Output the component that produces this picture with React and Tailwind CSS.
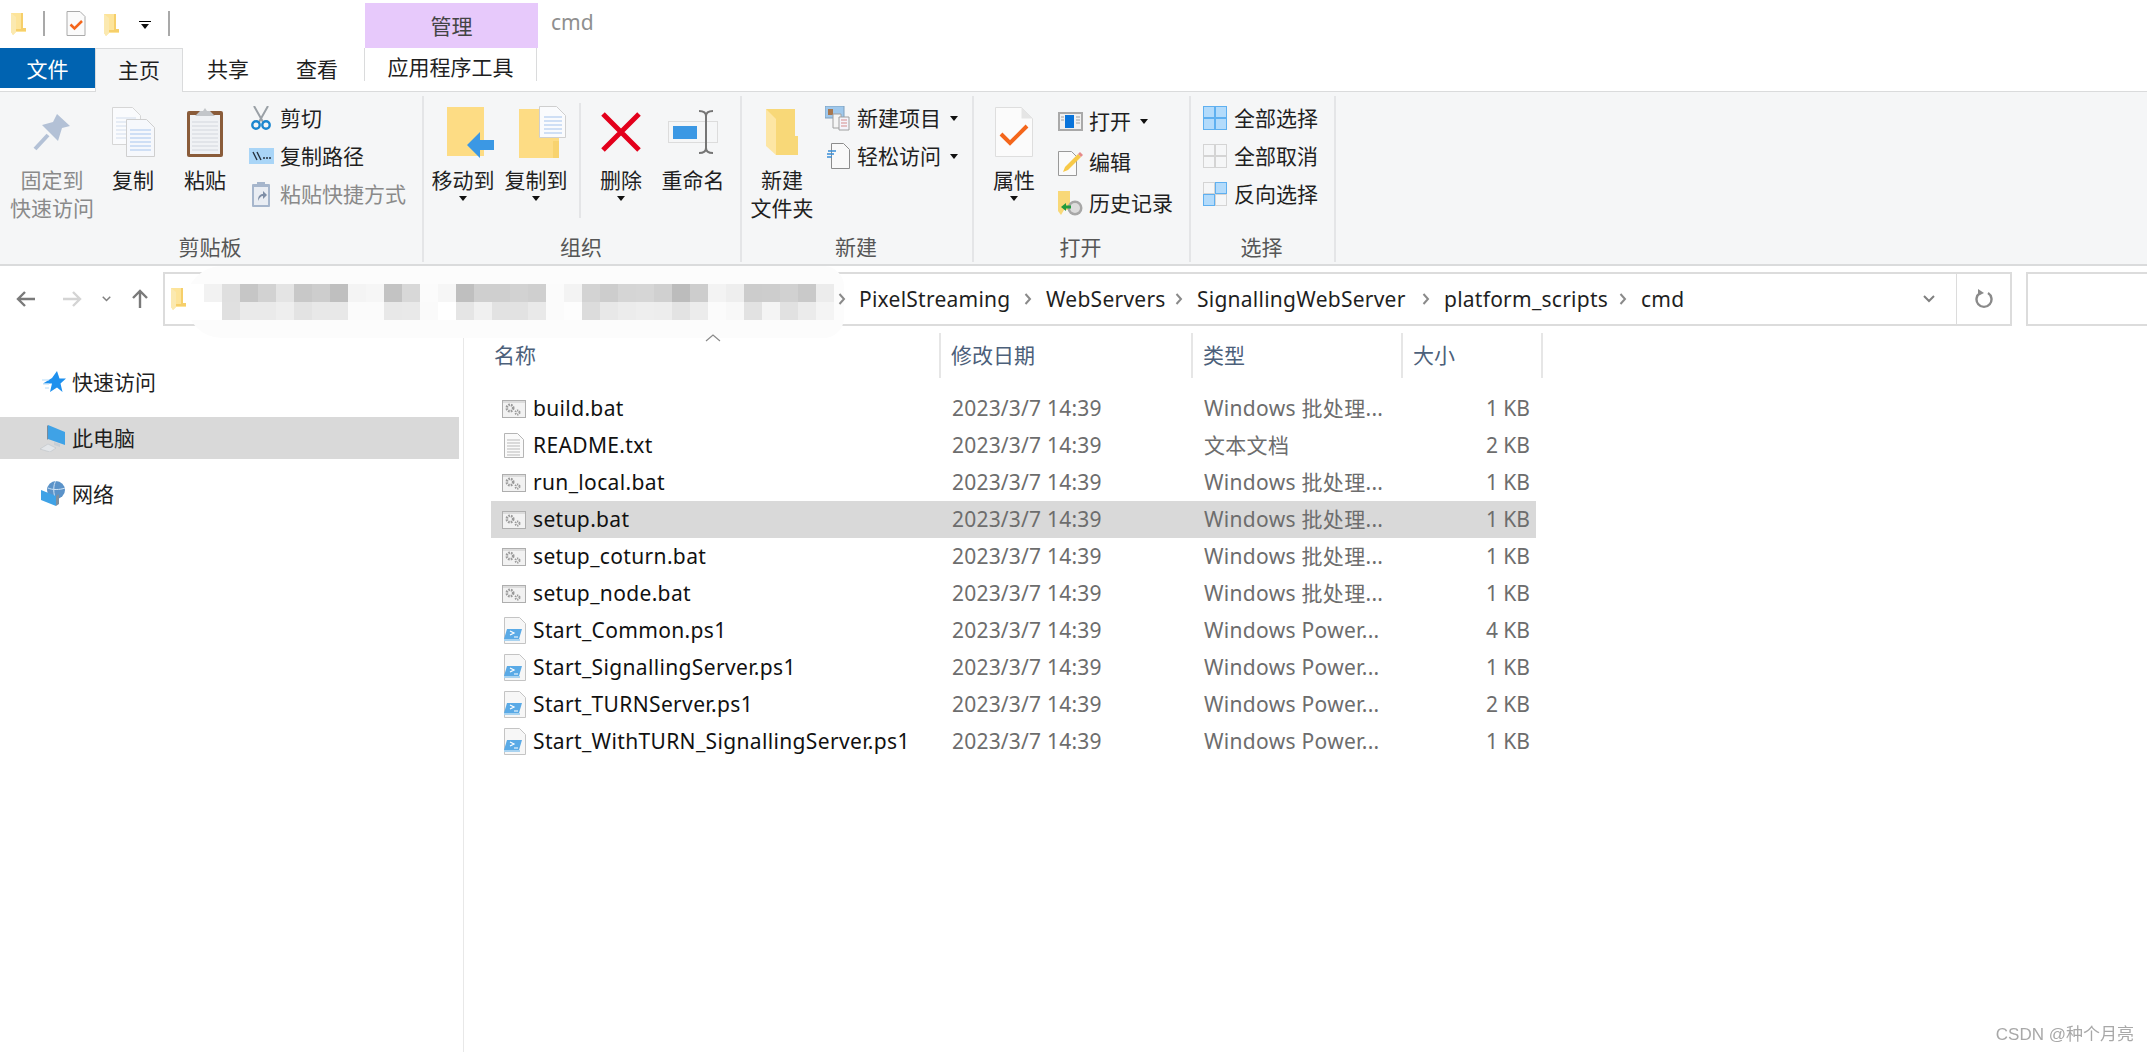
import React from "react";

const FOLDER = "#fddc84";

const Caret = ({ className = "" }) => (
  <svg width="8" height="5" viewBox="0 0 8 5" className={className}>
    <path d="M0 0h8L4 5z" fill="#111" />
  </svg>
);

const QuickFolder = () => (
  <svg width="16" height="24" viewBox="0 0 16 24">
    <path d="M0 1h10v15h5v4H5l-3 3-2-3z" fill="#fde49a" />
    <path d="M0 1l5 4v15l-3 3-2-3z" fill="#fbe9b0" />
    <path d="M10 1h2v15h3v3H5V17h5z" fill="#f6cf6a" />
  </svg>
);

const PinIcon = () => (
  <svg width="38" height="38" viewBox="0 0 38 38">
    <path d="M24 1l13 12-8 2-4 13L9 12l11-3z" fill="#b3c1d6" />
    <path d="M15 22L2 36" stroke="#b3c1d6" strokeWidth="4" />
  </svg>
);

const Lines = ({ x, y, w, n, gap = 4, color = "#cfdff5" }) =>
  Array.from({ length: n }).map((_, i) => (
    <rect key={i} x={x} y={y + i * gap} width={w} height="2" fill={color} />
  ));

const CopyIcon = () => (
  <svg width="43" height="50" viewBox="0 0 43 50">
    <path d="M.5.5h20l8 8v29H.5z" fill="#fafbfd" stroke="#d6d6d6" />
    <Lines x={4} y={10} w={20} n={6} color="#e6ecf5" />
    <path d="M14.5 12.5h20l8 8v29h-28z" fill="#f6f8fc" stroke="#cfcfcf" />
    <Lines x={18} y={22} w={21} n={6} />
  </svg>
);

const ClipboardIcon = () => (
  <svg width="36" height="50" viewBox="0 0 36 50">
    <rect y="4" width="36" height="46" rx="2" fill="#8a5c3a" />
    <rect x="3" y="8" width="30" height="39" fill="#f0f2f5" />
    <Lines x={5} y={14} w={26} n={8} gap={4} color="#e1e4e9" />
    <path d="M8 9l5-5h3l2-3 2 3h3l5 5z" fill="#c3c6ca" />
  </svg>
);

const ScissorsIcon = () => (
  <svg width="20" height="25" viewBox="0 0 20 25">
    <path d="M3 0l9 16M17 0L8 16" stroke="#9aa0a6" strokeWidth="2" />
    <circle cx="5" cy="19" r="3.7" fill="none" stroke="#1b86cf" strokeWidth="2.4" />
    <circle cx="15" cy="19" r="3.7" fill="none" stroke="#1b86cf" strokeWidth="2.4" />
  </svg>
);

const PathIcon = () => (
  <svg width="25" height="16" viewBox="0 0 25 16">
    <rect width="25" height="16" fill="#a9d5f7" />
    <path d="M4 4l4 8M8 4l4 8" stroke="#26323f" strokeWidth="1.4" />
    <path d="M14 10h8" stroke="#26323f" strokeWidth="1.6" strokeDasharray="2 1" />
  </svg>
);

const PasteShortcutIcon = () => (
  <svg width="18" height="25" viewBox="0 0 18 25">
    <rect y="2" width="18" height="23" rx="1" fill="#a6b6cc" />
    <rect x="2" y="5" width="14" height="18" fill="#e9edf3" />
    <rect x="5" y="0" width="8" height="4" fill="#a6b6cc" />
    <path d="M6 19c0-5 2-7 5-7V9l4 4-4 4v-3c-2 0-4 2-5 5z" fill="#7e8ea6" />
  </svg>
);

const MoveIcon = () => (
  <svg width="47" height="52" viewBox="0 0 47 52">
    <path d="M0 1h37v49H0z" fill={FOLDER} />
    <path d="M20 39L33 26v8h14v10H33v8z" fill="#3b98e4" />
  </svg>
);

const CopyToIcon = () => (
  <svg width="47" height="52" viewBox="0 0 47 52">
    <path d="M0 3h40v49H0z" fill={FOLDER} />
    <path d="M34 35h6v17h-6z" fill="#f8d36f" />
    <path d="M20.500 .5h17l9 9v22h-26z" fill="#fafbfd" stroke="#cfcfcf" />
    <Lines x={25} y={10} w={18} n={5} />
  </svg>
);

const DeleteIcon = () => (
  <svg width="40" height="40" viewBox="0 0 40 40">
    <path d="M2 2l36 36M38 2L2 38" stroke="#e3001b" strokeWidth="5" />
  </svg>
);

const RenameIcon = () => (
  <svg width="50" height="45" viewBox="0 0 50 45">
    <rect x=".5" y="11.500" width="49" height="21" fill="#f5f6f7" stroke="#dcdcdc" />
    <rect x="5" y="16" width="24" height="13" fill="#3b98e4" />
    <path d="M31 1c5 0 7 2 7 5v32c0 3-2 5-7 5M45 1c-5 0-7 2-7 5v32c0 3 2 5 7 5" fill="none" stroke="#757575" strokeWidth="2" />
  </svg>
);

const NewFolderIcon = () => (
  <svg width="33" height="48" viewBox="0 0 33 48">
    <path d="M0 1h29v27h3v19H10z" fill="#f8d878" />
    <path d="M0 1l10 10v36L0 38z" fill="#fde6a4" />
  </svg>
);

const NewItemIcon = () => (
  <svg width="26" height="25" viewBox="0 0 26 25">
    <rect width="19" height="12" fill="#9fc8ec" stroke="#7f9fbd" />
    <rect x="3" y="3" width="5" height="6" fill="#a8774f" />
    <path d="M8 8h8v14H8z" fill="#f5f5f5" stroke="#a0a0a0" />
    <path d="M14 11h10v13H14z" fill="#f4f4fb" stroke="#a0a0a0" />
    <path d="M16 14h6M16 17h6M16 20h6" stroke="#d48b8b" />
  </svg>
);

const EasyAccessIcon = () => (
  <svg width="23" height="26" viewBox="0 0 23 26">
    <path d="M4.500 .5h12l6 6v19h-18z" fill="#f9f9f9" stroke="#8c8c8c" />
    <path d="M1 8h8M0 11h7M0 14h5" stroke="#3a8fd8" strokeWidth="1.500" />
  </svg>
);

const PropertiesIcon = () => (
  <svg width="38" height="50" viewBox="0 0 38 50">
    <path d="M.5.5h26l11 11v38H.5z" fill="#fbfbfb" stroke="#dedede" />
    <path d="M26.500 .5v11h11z" fill="#e5e5e5" />
    <path d="M6 27l9 9 17-17" fill="none" stroke="#f4661b" strokeWidth="4" />
  </svg>
);

const OpenIcon = () => (
  <svg width="25" height="19" viewBox="0 0 25 19">
    <rect width="25" height="19" fill="#a9a9a9" />
    <rect x="2" y="2" width="21" height="15" fill="#f1f1f1" />
    <rect x="7" y="3" width="9" height="13" fill="#0a74da" />
    <path d="M18 5h4M18 8h4M18 11h4M3 5h3M3 8h3" stroke="#a0a0a0" />
  </svg>
);

const EditIcon = () => (
  <svg width="25" height="26" viewBox="0 0 25 26">
    <path d="M.5 1.500h13l5 5v19H.5z" fill="#fafafa" stroke="#999" />
    <path d="M5 22l2-5L20 4l3 3L10 20z" fill="#f7c948" />
    <path d="M20 4l2-2 3 3-2 2z" fill="#e58a8a" />
  </svg>
);

const HistoryIcon = () => (
  <svg width="25" height="25" viewBox="0 0 25 25">
    <path d="M0 0h12v12h2v7H6l-3 5-3-4z" fill="#f8d878" />
    <circle cx="17" cy="17" r="7.500" fill="#a7a7a7" />
    <circle cx="17" cy="17" r="5" fill="#dcdcdc" />
    <path d="M3 16l5-4v2.500h5v3H8V20z" fill="#1f9a3c" />
  </svg>
);

const GridIcon = ({ on }) => (
  <svg width="24" height="24" viewBox="0 0 24 24">
    {[[0, 0], [12, 0], [0, 12], [12, 12]].map(([x, y], i) => (
      <rect
        key={i}
        x={x + 0.5}
        y={y + 0.5}
        width="11"
        height="11"
        fill={on[i] ? "#b3dbfb" : "#f5f6f7"}
        stroke={on[i] ? "#5fb0f0" : "#d4d4d4"}
      />
    ))}
  </svg>
);

const ArrowIcon = ({ dir = "left", color = "#7a7a7a" }) => {
  const rot = dir === "left" ? "" : dir === "right" ? "rotate-180" : "rotate-90";
  return (
    <svg width="20" height="18" viewBox="0 0 20 18" className={rot}>
      <path d="M19 9H3M9 2L2 9l7 7" fill="none" stroke={color} strokeWidth="2.400" />
    </svg>
  );
};

const Chevron = ({ className = "" }) => (
  <svg width="8" height="12" viewBox="0 0 8 12" className={className}>
    <path d="M1.500 1l4.500 5-4.500 5" fill="none" stroke="#8a8a8a" strokeWidth="2" />
  </svg>
);

const ChevronDown = ({ w = 12, h = 8 }) => (
  <svg width={w} height={h} viewBox="0 0 12 8">
    <path d="M1 1l5 5 5-5" fill="none" stroke="#808080" strokeWidth="2" />
  </svg>
);

const RefreshIcon = () => (
  <svg width="18" height="22" viewBox="0 0 18 22">
    <path d="M5 5a7.500 7.500 0 1 0 8 0" fill="none" stroke="#8a8a8a" strokeWidth="2.400" />
    <path d="M3 1l6 4-6 3z" fill="#8a8a8a" />
  </svg>
);

const StarIcon = () => (
  <svg width="24" height="24" viewBox="0 0 24 24">
    <path d="M15 1l2.500 7.500H24l-5.500 5 2 8.500L15 17.500 8 22l2-8.500H1L10 8z" fill="#1e90ee" />
    <path d="M0 10h7M1 14h6M3 18h4" stroke="#b7dcf8" />
  </svg>
);

const ComputerIcon = () => (
  <svg width="26" height="27" viewBox="0 0 26 27">
    <path d="M8 0l17 7v13L8 14z" fill="#3fa2e6" />
    <path d="M8 0l-1 1v13l1 1z" fill="#7a8a99" />
    <path d="M14 17l6 2v3l-6-2z" fill="#c7ced5" />
    <path d="M0 24l8-5 8 4-6 4z" fill="#e3e6e9" stroke="#b9bec4" strokeWidth=".5" />
  </svg>
);

const NetworkIcon = () => (
  <svg width="25" height="26" viewBox="0 0 25 26">
    <circle cx="15" cy="9" r="9" fill="#5b93c9" />
    <path d="M15 0c-3 3-3 14 0 18M7 7c4 2 12 2 17 0" fill="none" stroke="#cfe4f6" />
    <path d="M0 9l15 6v10L0 19z" fill="#3fa2e6" />
    <path d="M15 15l3-2v10l-3 2z" fill="#7f8f9e" />
  </svg>
);

const BatIcon = () => (
  <svg width="24" height="18" viewBox="0 0 24 18">
    <rect x=".5" y=".5" width="23" height="17" fill="#f2f2f2" stroke="#aeaeae" />
    <rect x="1" y="1" width="22" height="2" fill="#dcdcdc" />
    <circle cx="8" cy="8" r="3.200" fill="none" stroke="#9a9a9a" strokeWidth="2.600" strokeDasharray="1.600 1" />
    <circle cx="15.500" cy="12.500" r="2" fill="none" stroke="#9a9a9a" strokeWidth="2" strokeDasharray="1.200 .8" />
  </svg>
);

const TxtIcon = () => (
  <svg width="20" height="25" viewBox="0 0 20 25">
    <path d="M.5.5h13l6 6v18H.5z" fill="#fafafa" stroke="#b5b5b5" />
    <path d="M3 7h13M3 10h13M3 13h13M3 16h13M3 19h13M3 22h13" stroke="#b9b9b9" />
  </svg>
);

const Ps1Icon = () => (
  <svg width="24" height="27" viewBox="0 0 24 27">
    <path d="M2.500.5h15l6 6v20h-21z" fill="#f7f7f7" stroke="#c4c4c4" />
    <path d="M5 12h15l-3 10H2z" fill="#5aaae6" />
    <path d="M8 14l4 2-4 2M12 20h4" fill="none" stroke="#fff" strokeWidth="1.200" />
    <rect x="2" y="22" width="16" height="2" fill="#a9d3f0" />
  </svg>
);

const BigButton = ({ icon, label, width, gray, caret }) => (
  <div className={`flex flex-col items-center pt-[8px] ${width}`}>
    <div className="flex h-[56px] w-full items-center justify-center">{icon}</div>
    <div className={`mt-[6px] text-center leading-[28px] ${gray ? "text-[#8a8a8a]" : "text-[#1f1f1f]"}`}>
      {label.map((line) => (
        <div key={line} className="whitespace-nowrap">{line}</div>
      ))}
    </div>
    {caret && <Caret className="mt-[2px]" />}
  </div>
);

const SmallItem = ({ icon, label, gray, caret, rowH = "h-[38px]" }) => (
  <div className={`flex items-center gap-[6px] ${rowH}`}>
    <div className="flex w-[26px] justify-center">{icon}</div>
    <span className={`whitespace-nowrap ${gray ? "text-[#8a8a8a]" : "text-[#1f1f1f]"}`}>{label}</span>
    {caret && <Caret className="ml-[3px]" />}
  </div>
);

const Group = ({ width, label, children }) => (
  <div className={`flex h-[166px] shrink-0 flex-col border-r-2 border-[#e4e5e7] ${width}`}>
    <div className="flex h-[136px]">{children}</div>
    <div className="flex h-[30px] items-center justify-center pr-[2px] text-[#565656]">{label}</div>
  </div>
);

const crumbs = [
  ["PixelStreaming", "w-[187px]"],
  ["WebServers", "w-[151px]"],
  ["SignallingWebServer", "w-[247px]"],
  ["platform_scripts", "w-[197px]"],
];

const mosaicTop = ["#ffffff", "#f2f2f2", "#dfdfdf", "#c6c6c6", "#d2d2d2", "#e4e4e4", "#c8c8c8", "#cdcdcd", "#bfbfbf", "#f4f4f4", "#f6f6f6", "#c3c3c3", "#d8d8d8", "#fbfbfb", "#f6f6f6", "#bfbfbf", "#cfcfcf", "#cfcfcf", "#d2d2d2", "#cfcfcf", "#fbfbfb", "#f3f3f3", "#d3d3d3", "#cdcdcd", "#d5d5d5", "#d6d6d6", "#d0d0d0", "#bcbcbc", "#cdcdcd", "#f3f3f3", "#eeeeee", "#cccccc", "#cdcdcd", "#d1d1d1", "#c9c9c9", "#ececec"];
const mosaicBottom = ["#ffffff", "#ffffff", "#e0e0e0", "#eaeaea", "#eaeaea", "#eeeeee", "#e3e3e3", "#e8e8e8", "#e8e8e8", "#fbfbfb", "#fbfbfb", "#e8e8e8", "#e9e9e9", "#fafafa", "#ffffff", "#e5e5e5", "#f0f0f0", "#e2e2e2", "#e2e2e2", "#e9e9e9", "#fbfbfb", "#fdfdfd", "#dcdcdc", "#e8e8e8", "#ececec", "#eeeeee", "#ededed", "#e3e3e3", "#ececec", "#fbfbfb", "#f8f8f8", "#e2e2e2", "#f4f4f4", "#e1e1e1", "#ebebeb", "#f4f4f4"];

const files = [
  ["build.bat", "bat", "Windows 批处理...", "1 KB"],
  ["README.txt", "txt", "文本文档", "2 KB"],
  ["run_local.bat", "bat", "Windows 批处理...", "1 KB"],
  ["setup.bat", "bat", "Windows 批处理...", "1 KB", true],
  ["setup_coturn.bat", "bat", "Windows 批处理...", "1 KB"],
  ["setup_node.bat", "bat", "Windows 批处理...", "1 KB"],
  ["Start_Common.ps1", "ps1", "Windows Power...", "4 KB"],
  ["Start_SignallingServer.ps1", "ps1", "Windows Power...", "1 KB"],
  ["Start_TURNServer.ps1", "ps1", "Windows Power...", "2 KB"],
  ["Start_WithTURN_SignallingServer.ps1", "ps1", "Windows Power...", "1 KB"],
];

const fileIcons = { bat: <BatIcon />, txt: <TxtIcon />, ps1: <Ps1Icon /> };

export default function App() {
  return (
    <div className="relative h-screen w-full overflow-hidden bg-white text-[21px] leading-none text-[#1f1f1f] [font-family:'Noto_Sans','Noto_Sans_CJK_SC',sans-serif]">
      {/* title bar */}
      <div className="flex h-[48px]">
        <div className="flex items-center pl-[11px]"><QuickFolder /></div>
        <div className="ml-[16px] mt-[11px] h-[25px] w-[2px] bg-[#a9a9a9]" />
        <div className="ml-[21px] mt-[11px]">
          <svg width="20" height="25" viewBox="0 0 38 50">
            <path d="M1 1h26l10 10v38H1z" fill="#fbfbfb" stroke="#aaa" strokeWidth="2" />
            <path d="M8 27l8 8 15-15" fill="none" stroke="#f4661b" strokeWidth="5" />
          </svg>
        </div>
        <div className="ml-[18px] mt-[13px]"><QuickFolder /></div>
        <div className="ml-[19px] mt-[21px] flex flex-col items-center gap-[2px]">
          <div className="h-[1px] w-[12px] bg-black" />
          <Caret />
        </div>
        <div className="ml-[17px] mt-[11px] h-[25px] w-[2px] bg-[#a9a9a9]" />
        <div className="ml-[195px] mt-[3px] flex h-[45px] w-[173px] items-center justify-center bg-[#e7c9fb] pt-[1px] text-[#444]">管理</div>
        <div className="ml-[13px] mt-[12px] text-[#8f8f8f]">cmd</div>
      </div>

      {/* tabs */}
      <div className="flex h-[44px] border-b border-[#dadbdc]">
        <div className="flex h-[40px] w-[95px] items-center justify-center bg-[#0063b1] pt-[2px] text-white">文件</div>
        <div className="-mb-px flex h-[44px] w-[88px] items-center justify-center border-x border-t border-[#dadbdc] bg-[#f5f6f7]">主页</div>
        <div className="flex h-[40px] w-[90px] items-center justify-center pt-[3px]">共享</div>
        <div className="flex h-[40px] w-[88px] items-center justify-center pt-[3px]">查看</div>
        <div className="ml-[3px] flex h-[33px] w-[173px] items-center justify-center border-x border-[#dadbdc] pt-[5px]">应用程序工具</div>
      </div>

      {/* ribbon */}
      <div className="flex h-[174px] border-b-2 border-[#dadbdc] bg-[#f5f6f7] py-[4px]">
        <Group width="w-[424px]" label="剪贴板">
          <div className="w-[4px]" />
          <BigButton width="w-[96px]" icon={<PinIcon />} label={["固定到", "快速访问"]} gray />
          <BigButton width="w-[66px]" icon={<CopyIcon />} label={["复制"]} />
          <BigButton width="w-[78px]" icon={<ClipboardIcon />} label={["粘贴"]} />
          <div className="pl-[4px] pt-[3px]">
            <SmallItem icon={<ScissorsIcon />} label="剪切" />
            <SmallItem icon={<PathIcon />} label="复制路径" />
            <SmallItem icon={<PasteShortcutIcon />} label="粘贴快捷方式" gray />
          </div>
        </Group>
        <Group width="w-[318px]" label="组织">
          <BigButton width="w-[78px]" icon={<div className="pl-[14px]"><MoveIcon /></div>} label={["移动到"]} caret />
          <BigButton width="w-[68px]" icon={<div className="pl-[12px]"><CopyToIcon /></div>} label={["复制到"]} caret />
          <div className="ml-[9px] mr-[9px] mt-[7px] h-[115px] w-[2px] bg-[#e4e5e7]" />
          <BigButton width="w-[62px]" icon={<DeleteIcon />} label={["删除"]} caret />
          <BigButton width="w-[82px]" icon={<RenameIcon />} label={["重命名"]} />
        </Group>
        <Group width="w-[232px]" label="新建">
          <BigButton width="w-[80px]" icon={<NewFolderIcon />} label={["新建", "文件夹"]} />
          <div className="pl-[3px] pt-[3px]">
            <SmallItem icon={<NewItemIcon />} label="新建项目" caret />
            <SmallItem icon={<EasyAccessIcon />} label="轻松访问" caret />
          </div>
        </Group>
        <Group width="w-[217px]" label="打开">
          <BigButton width="w-[80px]" icon={<PropertiesIcon />} label={["属性"]} caret />
          <div className="pl-[3px] pt-[5px]">
            <SmallItem rowH="h-[41px]" icon={<OpenIcon />} label="打开" caret />
            <SmallItem rowH="h-[41px]" icon={<EditIcon />} label="编辑" />
            <SmallItem rowH="h-[41px]" icon={<HistoryIcon />} label="历史记录" />
          </div>
        </Group>
        <Group width="w-[145px]" label="选择">
          <div className="pl-[11px] pt-[3px]">
            <SmallItem icon={<GridIcon on={[1, 1, 1, 1]} />} label="全部选择" />
            <SmallItem icon={<GridIcon on={[0, 0, 0, 0]} />} label="全部取消" />
            <SmallItem icon={<GridIcon on={[0, 1, 1, 0]} />} label="反向选择" />
          </div>
        </Group>
      </div>

      {/* address row */}
      <div className="flex pt-[6px]">
        <div className="flex h-[54px] w-[163px] items-center pl-[16px]">
          <ArrowIcon />
          <div className="ml-[26px]"><ArrowIcon dir="right" color="#d4d4d4" /></div>
          <div className="ml-[20px]"><ChevronDown w={9} h={6} /></div>
          <div className="ml-[19px]"><ArrowIcon dir="up" /></div>
        </div>
        <div className="flex h-[54px] w-[1849px] items-center border-2 border-[#dcdcdc] pl-[6px] tracking-[0.25px]">
          <QuickFolder />
          <div className="w-[672px]" />
          {crumbs.map(([name, width]) => (
            <div key={name} className={`flex items-center ${width}`}>
              <span>{name}</span>
              <Chevron className="ml-auto mr-[14px]" />
            </div>
          ))}
          <span>cmd</span>
          <div className="ml-auto flex h-full items-center">
            <ChevronDown />
            <div className="ml-[21px] h-full w-[1px] bg-[#dcdcdc]" />
            <div className="flex w-[53px] justify-center"><RefreshIcon /></div>
          </div>
        </div>
        <div className="ml-[14px] h-[54px] flex-1 border-y-2 border-l-2 border-[#dcdcdc]" />
      </div>

      {/* main */}
      <div className="flex h-[726px] pt-[7px]">
        <nav className="h-full w-[464px] shrink-0 border-r border-[#e8e8e8] pr-[4px] pt-[28px]">
          <div className="flex h-[42px] items-center gap-[6px] pl-[42px]"><StarIcon /><span>快速访问</span></div>
          <div className="mt-[14px] flex h-[42px] items-center gap-[6px] bg-[#d9d9d9] pl-[40px]"><ComputerIcon /><span>此电脑</span></div>
          <div className="mt-[14px] flex h-[42px] items-center gap-[6px] pl-[41px]"><NetworkIcon /><span>网络</span></div>
        </nav>
        <div className="pl-[27px]">
          <div className="flex h-[45px] items-center text-[#4c607a]">
            <div className="flex h-full w-[450px] items-center border-r-2 border-[#e6e6e6] pl-[3px]">名称</div>
            <div className="flex h-full w-[252px] items-center border-r-2 border-[#e6e6e6] pl-[10px]">修改日期</div>
            <div className="flex h-full w-[210px] items-center border-r-2 border-[#e6e6e6] pl-[10px]">类型</div>
            <div className="flex h-full w-[140px] items-center border-r-2 border-[#e6e6e6] pl-[10px]">大小</div>
          </div>
          <div className="mt-[12px] w-[1045px]">
            {files.map(([name, kind, type, size, selected]) => (
              <div key={name} className={`flex h-[37px] items-center ${selected ? "bg-[#d9d9d9]" : ""}`}>
                <div className="flex w-[461px] items-center">
                  <div className="flex w-[42px] justify-center pl-[3px]">{fileIcons[kind]}</div>
                  <span className="tracking-[0.35px] text-[#111]">{name}</span>
                </div>
                <div className="w-[252px] tracking-[0.2px] text-[#6d6d6d]">2023/3/7 14:39</div>
                <div className="flex-1 tracking-[0.3px] text-[#6d6d6d]">{type}</div>
                <div className="pr-[6px] text-right text-[#6d6d6d]">{size}</div>
              </div>
            ))}
          </div>
        </div>
      </div>

      {/* redaction smear over the address bar */}
      <div className="absolute left-[186px] top-[266px] h-[72px] w-[658px] rounded-l-[60px] rounded-r-[34px] bg-[#fcfcfc]">
        <div className="mt-[18px] flex">
          {mosaicTop.map((c, i) => (
            <div key={i} className="h-[18px] w-[18px]" style={{ backgroundColor: c }} />
          ))}
        </div>
        <div className="flex">
          {mosaicBottom.map((c, i) => (
            <div key={i} className="h-[18px] w-[18px]" style={{ backgroundColor: c }} />
          ))}
        </div>
      </div>
      <Chevron className="absolute left-[838px] top-[293px]" />
      <svg width="16" height="8" viewBox="0 0 16 8" className="absolute left-[705px] top-[334px]">
        <path d="M1 7l7-6 7 6" fill="none" stroke="#8a8a8a" strokeWidth="1.200" />
      </svg>

      <div className="absolute right-[13px] top-[1026px] text-[17px] text-[#a8a8a8] blur-[0.4px] [font-family:'Liberation_Sans','Noto_Sans_CJK_SC',sans-serif]">CSDN @种个月亮</div>
    </div>
  );
}
